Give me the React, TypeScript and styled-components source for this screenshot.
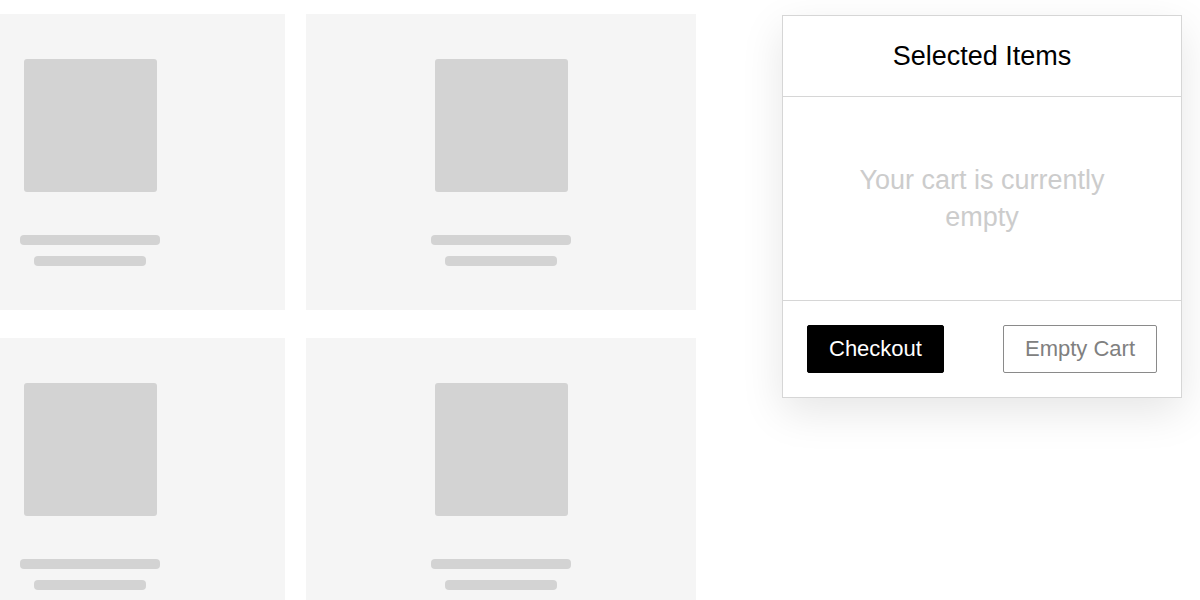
import React from "react";
import styled, { createGlobalStyle } from "styled-components";

const GlobalStyle = createGlobalStyle`
  html, body {
    margin: 0;
    padding: 0;
    background: #ffffff;
    font-family: "Liberation Sans", Arial, Helvetica, sans-serif;
  }
  * {
    box-sizing: border-box;
  }
`;

const Page = styled.div`
  display: flex;
  align-items: flex-start;
  height: 600px;
  width: 1200px;
  padding-top: 14px;
  overflow: hidden;
`;

const ProductGrid = styled.div`
  flex: none;
  display: grid;
  grid-template-columns: 390px 390px;
  grid-auto-rows: 296px;
  column-gap: 21px;
  row-gap: 28px;
  margin-left: -105px;
`;

const SkeletonCard = styled.div`
  display: flex;
  flex-direction: column;
  align-items: center;
  background: #f5f5f5;
  padding-top: 45px;
`;

const SkeletonImage = styled.div`
  width: 133px;
  height: 133px;
  background: #d3d3d3;
  border-radius: 3px;
`;

const SkeletonLine = styled.div<{ $width: number; $gap: number }>`
  width: ${(p) => p.$width}px;
  height: 10px;
  margin-top: ${(p) => p.$gap}px;
  background: #d3d3d3;
  border-radius: 4px;
`;

const CartPanel = styled.aside`
  flex: none;
  width: 400px;
  margin-left: 86px;
  margin-top: 1px;
  background: #ffffff;
  border: 1px solid #d6d6d6;
  box-shadow: 0 14px 40px rgba(0, 0, 0, 0.1);
  display: flex;
  flex-direction: column;
`;

const CartHeader = styled.div`
  height: 81px;
  display: flex;
  align-items: center;
  justify-content: center;
  border-bottom: 1px solid #d6d6d6;
`;

const CartTitle = styled.h2`
  margin: 0;
  font-size: 27px;
  font-weight: 400;
  color: #000000;
`;

const CartBody = styled.div`
  height: 204px;
  display: flex;
  align-items: center;
  justify-content: center;
  padding: 0 60px;
  border-bottom: 1px solid #d6d6d6;
`;

const EmptyText = styled.p`
  margin: 0;
  font-size: 27px;
  line-height: 37px;
  color: #cccccc;
  text-align: center;
`;

const CartFooter = styled.div`
  display: flex;
  align-items: center;
  justify-content: space-between;
  padding: 24px;
`;

const Button = styled.button<{ $variant: "primary" | "outline" }>`
  height: 48px;
  padding: 0 21px;
  font-family: inherit;
  font-size: 22px;
  border-radius: 2px;
  cursor: pointer;
  border: 1px solid ${(p) => (p.$variant === "primary" ? "#000000" : "#8a8a8a")};
  background: ${(p) => (p.$variant === "primary" ? "#000000" : "#ffffff")};
  color: ${(p) => (p.$variant === "primary" ? "#ffffff" : "#808080")};
`;

const cards = [1, 2, 3, 4];

const App = () => {
  return (
    <>
      <GlobalStyle />
      <Page>
        <ProductGrid>
          {cards.map((id) => (
            <SkeletonCard key={id}>
              <SkeletonImage />
              <SkeletonLine $width={140} $gap={43} />
              <SkeletonLine $width={112} $gap={11} />
            </SkeletonCard>
          ))}
        </ProductGrid>
        <CartPanel>
          <CartHeader>
            <CartTitle>Selected Items</CartTitle>
          </CartHeader>
          <CartBody>
            <EmptyText>Your cart is currently empty</EmptyText>
          </CartBody>
          <CartFooter>
            <Button $variant="primary">Checkout</Button>
            <Button $variant="outline">Empty Cart</Button>
          </CartFooter>
        </CartPanel>
      </Page>
    </>
  );
};

export default App;
